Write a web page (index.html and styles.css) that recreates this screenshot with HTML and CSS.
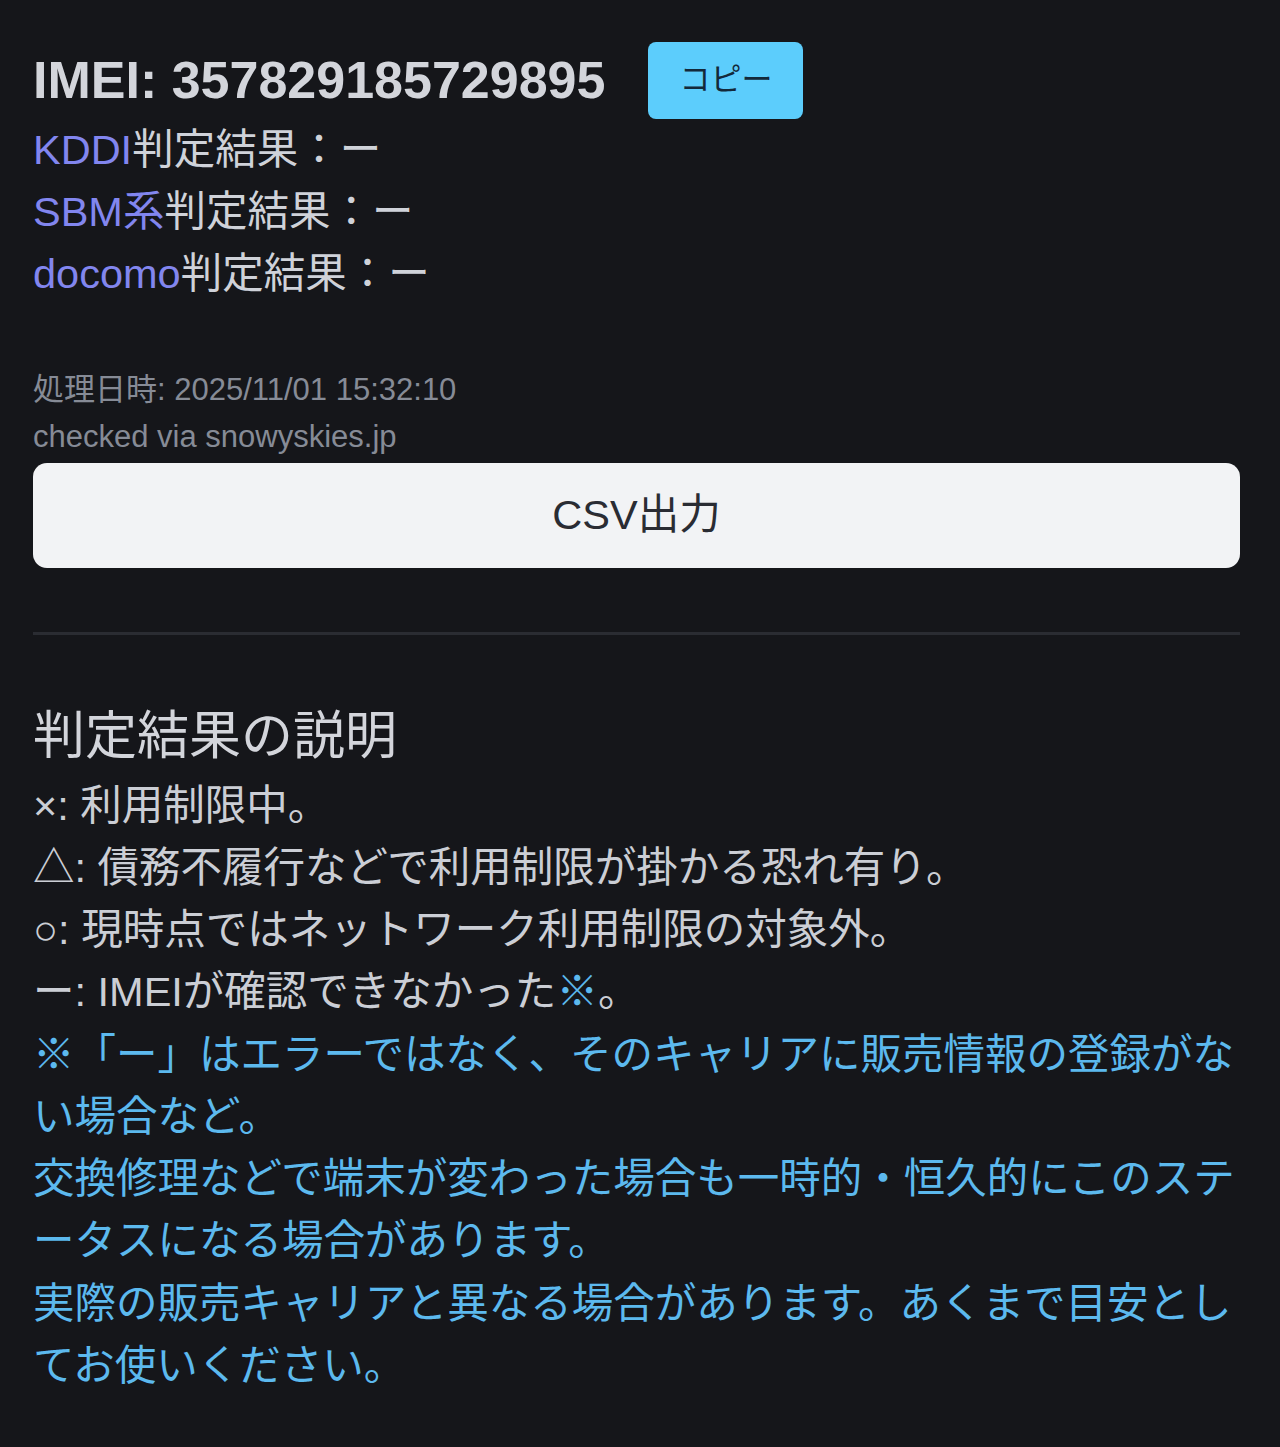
FILE: index.html
```html
<!DOCTYPE html>
<html lang="ja">
<head>
<meta charset="utf-8">
<title>IMEI 判定結果</title>
<link rel="stylesheet" href="styles.css">
</head>
<body>
<main class="page">
  <div class="imei-row">
    <h1 class="imei">IMEI: 357829185729895</h1>
    <button class="copy-btn" type="button">コピー</button>
  </div>
  <div class="results">
    <p class="result"><span class="carrier">KDDI</span>判定結果：ー</p>
    <p class="result"><span class="carrier">SBM系</span>判定結果：ー</p>
    <p class="result"><span class="carrier">docomo</span>判定結果：ー</p>
  </div>
  <div class="meta">
    <p class="meta-line">処理日時: 2025/11/01 15:32:10</p>
    <p class="meta-line">checked via snowyskies.jp</p>
  </div>
  <button class="csv-btn" type="button">CSV出力</button>
  <hr class="divider">
  <section class="legend">
    <h2 class="legend-title">判定結果の説明</h2>
    <p class="legend-line">×: 利用制限中。</p>
    <p class="legend-line">△: 債務不履行などで利用制限が掛かる恐れ有り。</p>
    <p class="legend-line"><span class="circle">○</span>: 現時点ではネットワーク利用制限の対象外。</p>
    <p class="legend-line">ー: IMEIが確認できなかった<span class="note-mark">※</span>。</p>
    <p class="note">※「ー」はエラーではなく、そのキャリアに販売情報の登録がない場合など。</p>
    <p class="note">交換修理などで端末が変わった場合も一時的・恒久的にこのステータスになる場合があります。</p>
    <p class="note">実際の販売キャリアと異なる場合があります。あくまで目安としてお使いください。</p>
  </section>
</main>
</body>
</html>
```
FILE: styles.css
```css
html, body {
  margin: 0;
  padding: 0;
  background: #15161a;
}
body {
  font-family: "Liberation Sans", "Noto Sans CJK JP", sans-serif;
  font-size: 41.5px;
  line-height: 1.5;
  color: #cfd2d9;
}
.page {
  padding: 42px 40px 40px 33px;
}
p, h1, h2 {
  margin: 0;
}
.imei-row {
  display: flex;
  align-items: center;
  gap: 43px;
}
.imei {
  font-size: 52px;
  font-weight: 700;
  line-height: 1.2;
  color: #d3d5db;
}
.copy-btn {
  font-family: "Liberation Sans", "Noto Sans CJK JP", sans-serif;
  font-size: 31px;
  line-height: 1.5;
  padding: 15px 31px;
  border: 0;
  border-radius: 8px;
  background: #5ccdfc;
  color: #13293a;
}
.carrier {
  color: #8286ef;
}
.meta {
  margin-top: 62px;
  font-size: 31px;
  color: #868b96;
}
.csv-btn {
  display: block;
  width: 100%;
  margin-top: 3px;
  padding: 21px 0;
  border: 0;
  border-radius: 14px;
  background: #f2f3f5;
  color: #2a2c33;
  font-family: "Liberation Sans", "Noto Sans CJK JP", sans-serif;
  font-size: 41.5px;
  line-height: 1.5;
}
.divider {
  margin: 64px 0 0;
  border: 0;
  height: 3px;
  background: #2a2c32;
}
.legend {
  margin-top: 62px;
}
.legend-title {
  font-size: 52px;
  font-weight: 400;
  line-height: 1.5;
  color: #d3d5db;
}
.legend-line {
  color: #cbced5;
}
.note-mark,
.note {
  color: #5cb9ee;
}
```
